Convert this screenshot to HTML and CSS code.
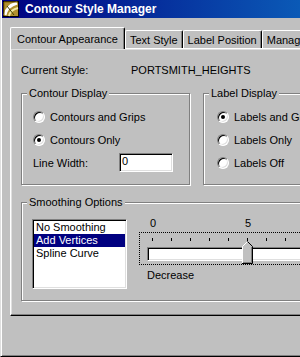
FILE: index.html
```html
<!DOCTYPE html>
<html lang="en">
<head>
    <meta charset="UTF-8">
    <title>Contour Style Manager</title>
    <link rel="stylesheet" href="styles.css">
</head>
<body>
<div class="window">

  <!-- title bar -->
  <div class="titlebar">
    <svg class="app-icon" width="16" height="16" viewBox="0 0 16 16">
      <rect x="0.5" y="0.5" width="15" height="15" fill="#b09030" stroke="#000"/>
      <path d="M2 14 C3 9 7 4 14 2" stroke="#fff" stroke-width="3" fill="none"/>
      <path d="M6 15 C7 11 10 8 15 7" stroke="#f0e8a0" stroke-width="2" fill="none"/>
      <path d="M4 5 L11 14" stroke="#404000" fill="none"/>
      <path d="M1 1 H15 M1 1 V15" stroke="#806000" fill="none"/>
    </svg>
    <span class="title">Contour Style Manager</span>
  </div>

  <!-- tabs -->
  <div class="tabs">
    <div class="tab active">Contour Appearance</div>
    <div class="tab">Text Style</div>
    <div class="tab">Label Position</div>
    <div class="tab">Manage Styles</div>
  </div>

  <div class="panel">
    <div class="current">
      <span class="current-label">Current Style:</span>
      <span>PORTSMITH_HEIGHTS</span>
    </div>

    <div class="group-row">
      <div class="group contour-group">
        <div class="legend">Contour Display</div>
        <div class="opts">
          <div class="opt"><span class="radio"></span>Contours and Grips</div>
          <div class="opt"><span class="radio checked"></span>Contours Only</div>
          <div class="opt"><span class="field-label">Line Width:</span><span class="textbox">0</span></div>
        </div>
      </div>
      <div class="group label-group">
        <div class="legend">Label Display</div>
        <div class="opts">
          <div class="opt"><span class="radio checked"></span>Labels and Grips</div>
          <div class="opt"><span class="radio"></span>Labels Only</div>
          <div class="opt"><span class="radio"></span>Labels Off</div>
        </div>
      </div>
    </div>

    <div class="group smoothing">
      <div class="legend">Smoothing Options</div>
      <div class="smooth-body">
        <ul class="listbox">
          <li>No Smoothing</li>
          <li class="sel">Add Vertices</li>
          <li>Spline Curve</li>
        </ul>
        <div class="slider">
          <div class="scale"><span class="scale-first">0</span><span>5</span></div>
          <div class="focus">
            <div class="ticks"></div>
            <div class="track">
              <svg class="thumb" width="11" height="23" viewBox="0 0 11 23">
                <path d="M0.5 22.5V5.5L5.5 0.5L10.5 5.5V22.5Z" fill="#c0c0c0"/>
                <path d="M0.5 22V5.5L5 1" stroke="#fff" fill="none"/>
                <path d="M5.5 0.5L10.5 5.5V22.5H0" stroke="#000" fill="none"/>
                <path d="M9.5 6V21.5H1" stroke="#808080" fill="none"/>
              </svg>
            </div>
          </div>
          <div class="slider-caption">Decrease</div>
        </div>
      </div>
    </div>
  </div>

</div>
</body>
</html>
```

FILE: styles.css
```css
body {
  margin: 0;
  width: 300px;
  height: 357px;
  overflow: hidden;
  background-color: #c0c0c0;
  color: #000;
  font-family: "Liberation Sans", Arial, sans-serif;
  font-size: 11px;
}

.window {
  width: 440px;
  height: 357px;
  box-sizing: border-box;
  border-left: 1px solid #dfdfdf;
  border-bottom: 1px solid #000;
  box-shadow: inset 1px 0 #fff, inset 0 -1px #808080;
  padding-left: 1px;
}

/* title bar */
.titlebar {
  height: 18px;
  display: flex;
  align-items: center;
  gap: 6px;
  padding-left: 1px;
  background: linear-gradient(90deg, #000080, #1084d0);
}

.app-icon {
  display: block;
}

.title {
  color: #fff;
  font-weight: bold;
  font-size: 12px;
  white-space: nowrap;
}

/* tabs */
.tabs {
  display: flex;
  align-items: flex-end;
  height: 30px;
  margin-left: 8px;
}

.tab {
  height: 18px;
  box-sizing: border-box;
  display: flex;
  align-items: center;
  padding: 0 4px;
  white-space: nowrap;
  border: 1px solid #fff;
  border-right-color: #000;
  border-bottom: none;
  border-radius: 2px 2px 0 0;
  box-shadow: inset -1px 0 #808080;
}

.tab.active {
  height: 22px;
  padding: 0 6px;
  margin-bottom: -1px;
  position: relative;
  z-index: 1;
  background-color: #c0c0c0;
}

/* tab page */
.panel {
  width: 400px;
  height: 268px;
  margin-left: 8px;
  box-sizing: border-box;
  border: 1px solid #fff;
  border-right-color: #000;
  border-bottom-color: #000;
  box-shadow: inset -1px -1px #808080, inset 1px 1px #dfdfdf;
  padding: 15px 10px 0;
}

.current {
  display: flex;
  height: 13px;
  line-height: 13px;
}

.current-label {
  width: 110px;
}

.group-row {
  display: flex;
  gap: 13px;
  margin-top: 16px;
}

.group {
  box-sizing: border-box;
  border: 1px solid #808080;
  box-shadow: 1px 1px #fff, inset 1px 1px #fff;
}

.legend {
  width: fit-content;
  margin: -7px 0 0 5px;
  padding: 0 2px;
  line-height: 13px;
  background-color: #c0c0c0;
  white-space: nowrap;
}

.contour-group {
  width: 169px;
  height: 92px;
}

.label-group {
  flex: 1;
  height: 92px;
}

.opts {
  padding: 5px 0 0 11px;
}

.label-group .opts {
  padding-left: 13px;
}

.opt {
  display: flex;
  align-items: center;
  gap: 5px;
  height: 23px;
  white-space: nowrap;
}

.radio {
  width: 12px;
  height: 12px;
  box-sizing: border-box;
  border-radius: 50%;
  border: 1px solid;
  border-color: #808080 #fff #fff #808080;
  box-shadow: inset 1px 1px #000, inset -1px -1px #dfdfdf;
  background-color: #fff;
  display: flex;
  align-items: center;
  justify-content: center;
}

.radio.checked::after {
  content: "";
  width: 4px;
  height: 4px;
  border-radius: 50%;
  background-color: #000;
}

.field-label {
  width: 81px;
}

.textbox {
  width: 54px;
  height: 19px;
  box-sizing: border-box;
  padding-left: 2px;
  line-height: 15px;
  background-color: #fff;
  border: 1px solid;
  border-color: #808080 #fff #fff #808080;
  box-shadow: inset 1px 1px #000, inset -1px -1px #dfdfdf;
}

/* smoothing */
.smoothing {
  height: 99px;
  margin-top: 17px;
}

.smooth-body {
  display: flex;
  align-items: flex-start;
  gap: 12px;
  padding: 10px 0 0 10px;
}

.listbox {
  width: 95px;
  height: 70px;
  box-sizing: border-box;
  margin: 0;
  padding: 1px;
  list-style: none;
  background-color: #fff;
  border: 1px solid;
  border-color: #808080 #fff #fff #808080;
  box-shadow: inset 1px 1px #000, inset -1px -1px #dfdfdf;
}

.listbox li {
  line-height: 13px;
  padding-left: 2px;
  white-space: nowrap;
}

.listbox .sel {
  background-color: #000080;
  color: #fff;
}

.slider {
  flex: 1;
  margin-top: -2px;
}

.scale {
  display: flex;
  height: 13px;
  line-height: 13px;
  padding-left: 11px;
}

.scale-first {
  width: 95px;
}

.focus {
  height: 33px;
  box-sizing: border-box;
  margin-top: 2px;
  border: 1px dotted #000;
}

.ticks {
  height: 3px;
  margin: 5px 0 0 12px;
  background: repeating-linear-gradient(90deg, #000 0 1px, transparent 1px 19px);
}

.track {
  position: relative;
  height: 14px;
  box-sizing: border-box;
  margin: 6px 0 0 7px;
  background-color: #fff;
  border-top: 1px solid #808080;
  border-left: 1px solid #808080;
  border-bottom: 1px solid #fff;
  box-shadow: inset 1px 1px #000, inset 0 -1px #dfdfdf;
}

.thumb {
  position: absolute;
  left: 94px;
  top: -7px;
  display: block;
}

.slider-caption {
  margin-top: 4px;
  line-height: 13px;
  padding-left: 8px;
}
```
